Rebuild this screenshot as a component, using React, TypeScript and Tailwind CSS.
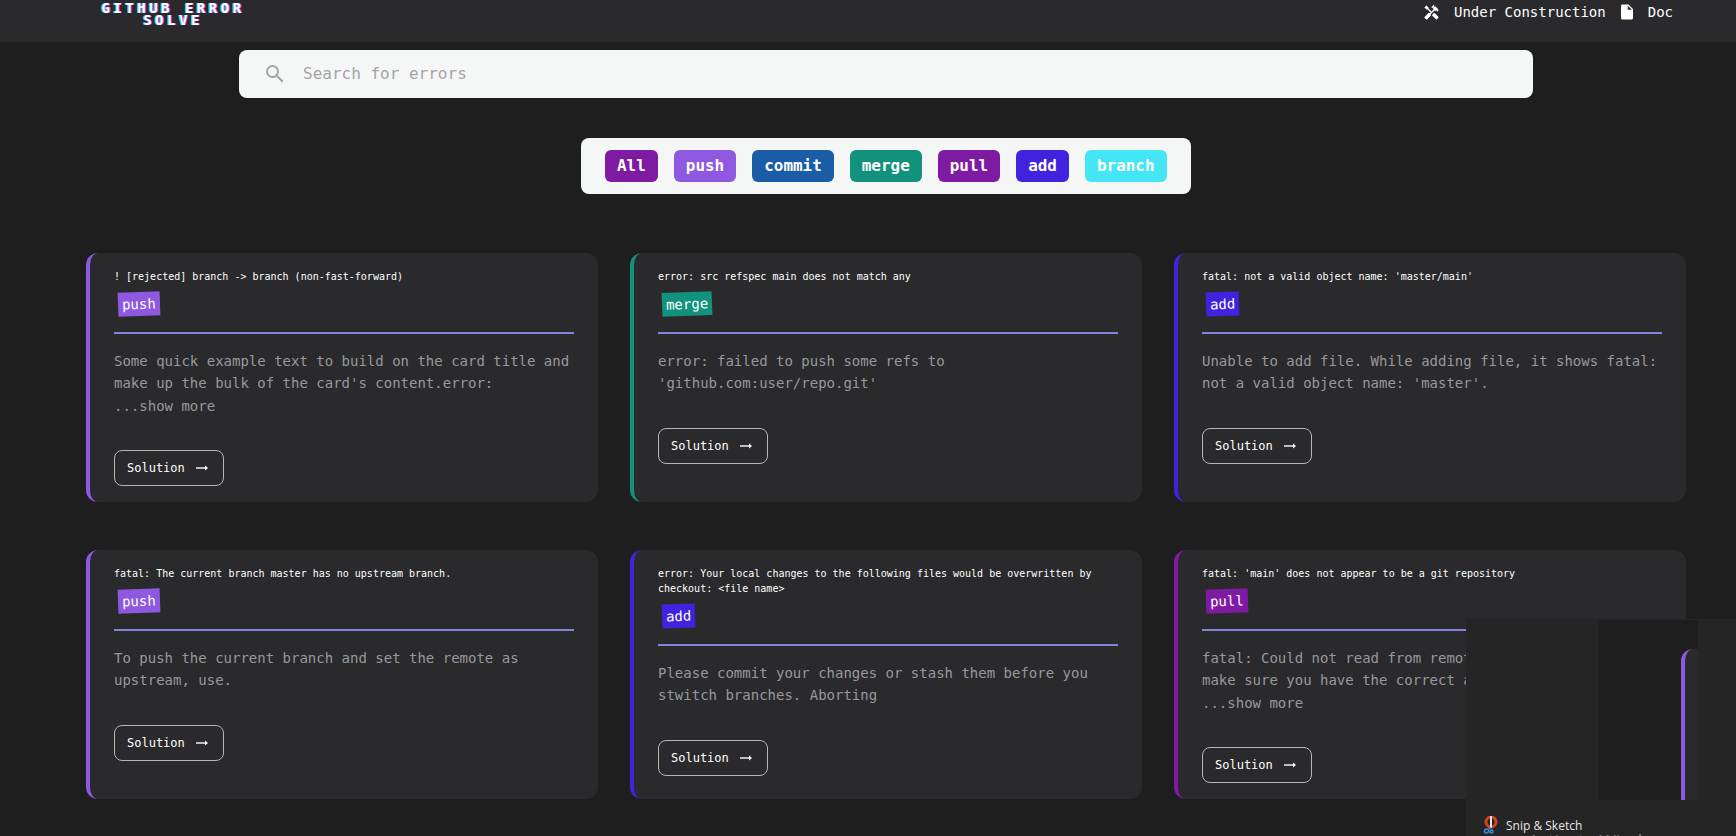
import { MdHandyman, MdInsertDriveFile, MdSearch } from "react-icons/md";

const mono = "font-['DejaVu_Sans_Mono','Liberation_Mono',monospace]";

const filters = [
  { label: "All", color: "bg-[#7f1ba2]" },
  { label: "push", color: "bg-[#8e58e0]" },
  { label: "commit", color: "bg-[#1a5ca6]" },
  { label: "merge", color: "bg-[#12917c]" },
  { label: "pull", color: "bg-[#7f1ba2]" },
  { label: "add", color: "bg-[#4122de]" },
  { label: "branch", color: "bg-[#44e6f5]" },
];

const cards = [
  {
    title: "! [rejected] branch -> branch (non-fast-forward)",
    tag: "push",
    border: "border-[#8e58e0]",
    bg: "bg-[#8e58e0]",
    body: ["Some quick example text to build on the card title and", "make up the bulk of the card's content.error:", "...show more"],
  },
  {
    title: "error: src refspec main does not match any",
    tag: "merge",
    border: "border-[#12917c]",
    bg: "bg-[#12917c]",
    body: ["error: failed to push some refs to", "'github.com:user/repo.git'"],
  },
  {
    title: "fatal: not a valid object name: 'master/main'",
    tag: "add",
    border: "border-[#4122de]",
    bg: "bg-[#4122de]",
    body: ["Unable to add file. While adding file, it shows fatal:", "not a valid object name: 'master'."],
  },
  {
    title: "fatal: The current branch master has no upstream branch.",
    tag: "push",
    border: "border-[#8e58e0]",
    bg: "bg-[#8e58e0]",
    body: ["To push the current branch and set the remote as", "upstream, use."],
  },
  {
    title: "error: Your local changes to the following files would be overwritten by checkout: <file name>",
    tag: "add",
    border: "border-[#4122de]",
    bg: "bg-[#4122de]",
    body: ["Please commit your changes or stash them before you", "stwitch branches. Aborting"],
  },
  {
    title: "fatal: 'main' does not appear to be a git repository",
    tag: "pull",
    border: "border-[#7f1ba2]",
    bg: "bg-[#7f1ba2]",
    body: ["fatal: Could not read from remote repository. Please", "make sure you have the correct access rights", "...show more"],
  },
];

function Card({ card }: { card: (typeof cards)[number] }) {
  return (
    <div className={`rounded-xl border-l-4 ${card.border} bg-[#2a2a2d] px-6 pt-4 pb-4`}>
      <p className="text-[10px] leading-[15px] text-white">{card.title}</p>
      <span className={`mt-2 ml-1 inline-block -rotate-2 ${card.bg} px-[4px] align-top text-[14px] leading-6 text-white`}>
        {card.tag}
      </span>
      <hr className="mt-4 mb-4 border-t-2 border-[#8282df]" />
      <p className="mb-[32.8px] text-[14px] leading-[22.4px] text-[#98989c]">
        {card.body.map((line) => (
          <span key={line} className="block whitespace-nowrap">
            {line}
          </span>
        ))}
      </p>
      <button className="flex h-9 w-[110px] items-center gap-[11px] rounded-lg border border-[#b5b5b5] px-3 text-xs text-white">
        Solution
        <svg width="12" height="8" viewBox="0 0 12 8" className="shrink-0">
          <path d="M0 4h9" stroke="white" strokeWidth="1.4" />
          <path d="M9 1.5 12 4 9 6.5z" fill="white" />
        </svg>
      </button>
    </div>
  );
}

export default function App() {
  return (
    <div className={`relative h-[836px] overflow-hidden bg-[#1e1e1e] ${mono}`}>
      {/* Navbar */}
      <header className="flex h-[42px] items-start justify-between bg-[#2a2a2d] pl-[100px] pr-[63px]">
        <div className="w-[146px] pt-[2px] text-center text-[14px] leading-[12px] font-bold tracking-[3.5px] whitespace-nowrap text-white [text-shadow:1px_0_0_#e040fb,-1px_0_0_#22e6f5]">
          GITHUB ERROR
          <br />
          SOLVE
        </div>
        <nav className="flex items-center pt-[3px] text-sm leading-[14px] text-white">
          <MdHandyman className="h-[17px] w-[17px]" />
          <span className="ml-[14px]">Under Construction</span>
          <MdInsertDriveFile className="ml-[12px] h-[18px] w-[18px]" />
          <span className="ml-[12px]">Doc</span>
        </nav>
      </header>

      {/* Search */}
      <div className="pt-2">
        <div className="ml-[239px] flex h-12 w-[1294px] items-center rounded-lg bg-[#f5f7f7] pl-6">
          <MdSearch className="h-6 w-6 text-[#a3a3a8]" />
          <span className="ml-4 text-base text-[#a3a3a8]">Search for errors</span>
        </div>
      </div>

      {/* Filters */}
      <div className="mt-10 ml-[581px] flex h-14 w-[610px] items-center gap-4 rounded-lg bg-[#f5f7f7] px-6">
        {filters.map((f) => (
          <span key={f.label} className={`flex h-8 items-center rounded-md px-3 text-[15.95px] font-bold text-white ${f.color}`}>
            {f.label}
          </span>
        ))}
      </div>

      {/* Error cards */}
      <div className="mt-[59px] grid grid-cols-[repeat(3,512px)] gap-x-8 gap-y-12 pl-[86px]">
        {cards.map((card) => (
          <Card key={card.title} card={card} />
        ))}
      </div>

      {/* Snip & Sketch taskbar preview */}
      <div className="absolute top-[619px] left-[1466px] h-[217px] w-[270px] bg-[#252525]">
        <div className="absolute top-[1px] left-[133px] h-[180px] w-[99px] bg-[#1e1e1e]">
          <div className="absolute top-[29px] left-[82px] h-[151px] w-[17px] rounded-tl-xl border-l-4 border-[#8e58e0] bg-[#2a2a2d]" />
        </div>
        <svg width="16" height="18" viewBox="0 0 16 18" className="absolute top-[197px] left-[17px]">
          <circle cx="8" cy="6" r="5" fill="none" stroke="#d9401c" strokeWidth="3" />
          <path d="M8 0v12" stroke="#e8e8e8" strokeWidth="2" />
          <circle cx="3.5" cy="15" r="2" fill="none" stroke="#2f8fe0" strokeWidth="1.5" />
          <circle cx="8.5" cy="15.5" r="1.5" fill="none" stroke="#2f8fe0" strokeWidth="1.5" />
          <path d="M5 13.5l3-2" stroke="#2f8fe0" strokeWidth="1.5" />
        </svg>
        <span className="absolute top-[199px] left-[40px] font-['Open_Sans',sans-serif] text-xs leading-4 text-[#e6e6e6]">Snip &amp; Sketch</span>
        <span className="absolute top-[210px] left-[62px] font-['Open_Sans',sans-serif] text-lg leading-6 text-[#7c7c7c]">Activate Windows</span>
      </div>
    </div>
  );
}
